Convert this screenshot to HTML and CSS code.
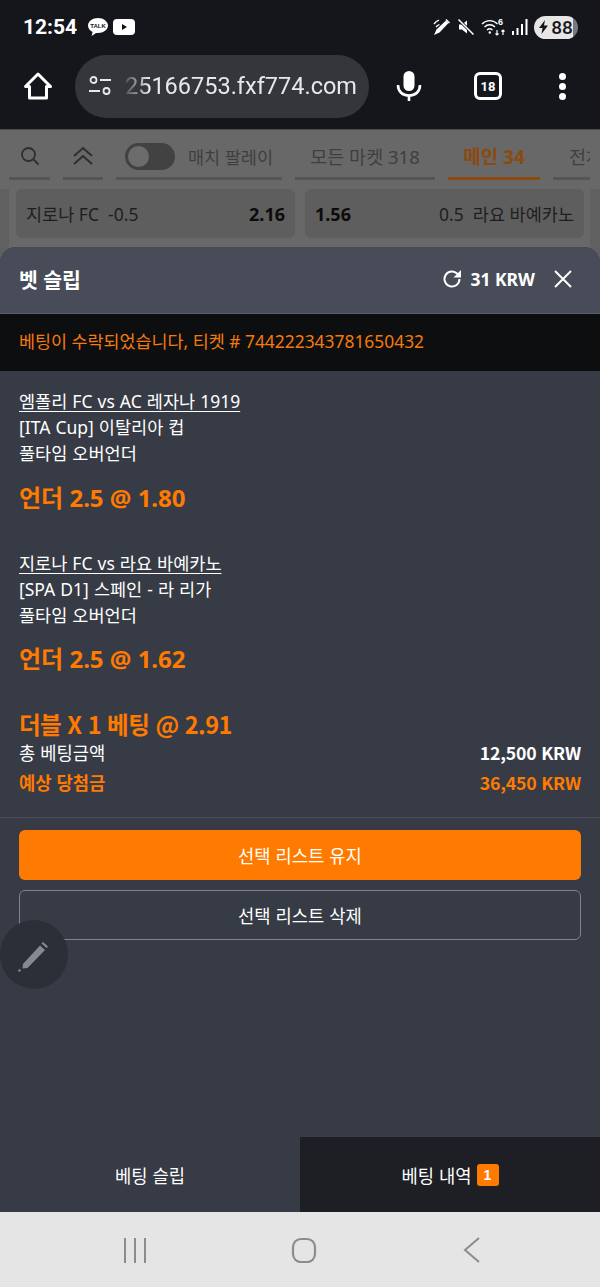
FILE: index.html
```html
<!DOCTYPE html>
<html lang="ko">
<head>
    <meta charset="UTF-8">
    <meta name="viewport" content="width=device-width, initial-scale=1.0">
    <title>벳 슬립</title>
    <link rel="stylesheet" href="styles.css">
</head>
<body>
<div class="phone">
    <div class="statusbar">
        <span class="clock">12:54</span>
        <svg class="st-talk" viewBox="0 0 22 20"><path d="M11 1C5.500 1 1 4.400 1 8.600c0 2.700 1.800 5 4.600 6.400l-1 4 4.500-3c.6.100 1.300.1 1.900.1 5.500 0 10-3.400 10-7.500S16.500 1 11 1z" fill="#fff"/><text x="11" y="11" class="st-talk-txt">TALK</text></svg>
        <svg class="st-yt" viewBox="0 0 22 16"><rect width="22" height="16" rx="4" fill="#fff"/><path d="M9 5l5 3-5 3z" fill="#111"/></svg>
        <span class="st-gap"></span>
        <svg class="st-icon" width="18" height="18" viewBox="0 0 18 18"><path d="M1 17l2.500-5.500L13 2.500l2.500 2.500L6.500 14.500z" fill="#fff"/><path d="M13.500 1l3.500 3.500-1 1L12.500 2z" fill="#fff"/><path d="M1 6c1.500-2 3-3.200 5-3.800M3 9c1-1.300 2-2 3.500-2.500" stroke="#fff" stroke-width="1.300" fill="none"/></svg>
        <svg class="st-icon" width="18" height="18" viewBox="0 0 18 18"><path d="M2 6.500h3L10 2.500v13l-5-4H2z" fill="#fff"/><path d="M1.500 1.500l15 15" stroke="#15161b" stroke-width="3"/><path d="M1.500 1.500l15 15" stroke="#fff" stroke-width="1.500"/></svg>
        <svg class="st-icon st-wifi" width="26" height="20" viewBox="0 0 26 20"><path d="M1 7c4.500-4.500 11-4.500 15.500 0M3.500 10c3-3 7.500-3 10.500 0M6 13c1.800-1.600 3.700-1.600 5.500 0" stroke="#fff" stroke-width="1.300" fill="none"/><circle cx="8.800" cy="15.500" r="1.200" fill="#fff"/><path d="M16 13v5M14.500 16.500l1.500 1.500 1.500-1.500M22 18v-5M20.500 14.500l1.500-1.500 1.500 1.500" stroke="#fff" stroke-width="1.200" fill="none"/><text x="17" y="8" class="st-six">6</text></svg>
        <svg class="st-icon" width="17" height="18" viewBox="0 0 17 18"><rect x="1" y="13" width="2" height="4" fill="#fff"/><rect x="5.500" y="10" width="2" height="7" fill="#fff"/><rect x="10" y="6" width="2" height="11" fill="#fff"/><rect x="14.500" y="1" width="2" height="16" fill="#fff"/></svg>
        <span class="battery"><svg width="9" height="14" viewBox="0 0 9 14"><path d="M6 0L0 8h3.500L2.500 14 9 5.500H5z" fill="#15161b"/></svg>88</span>
    </div>

    <div class="urlbar">
        <svg class="nav-home" width="30" height="30" viewBox="0 0 30 30"><path d="M15 3L2.500 15.500H6.500V27H23.500V15.500H27.500z" fill="none" stroke="#fff" stroke-width="3" stroke-linejoin="round"/></svg>
        <div class="omnibox">
            <svg width="24" height="20" viewBox="0 0 24 20"><circle cx="5.500" cy="4" r="3" fill="none" stroke="#e8e8ea" stroke-width="1.800"/><path d="M12 4h11M1 15h11" stroke="#e8e8ea" stroke-width="1.800"/><circle cx="18.500" cy="15" r="3" fill="none" stroke="#e8e8ea" stroke-width="1.800"/></svg>
            <span class="url">25166753.fxf774.com</span>
        </div>
        <svg class="nav-mic" width="26" height="32" viewBox="0 0 26 32"><rect x="7.500" y="1" width="11" height="20" rx="5.500" fill="#fff"/><path d="M2 15c0 6.500 4.500 10.500 11 10.500S24 21.500 24 15M13 25.500V31" fill="none" stroke="#fff" stroke-width="2.600"/></svg>
        <span class="tabs-count">18</span>
        <span class="kebab"><i></i><i></i><i></i></span>
    </div>

    <div class="page">
        <div class="market-tabs">
            <span class="mt mt-search"><svg width="20" height="20" viewBox="0 0 20 20"><circle cx="8.500" cy="8.500" r="6.500" fill="none" stroke="#2e2e2e" stroke-width="1.800"/><path d="M13.500 13.500L18.500 18.500" stroke="#2e2e2e" stroke-width="1.800"/></svg></span>
            <span class="mt mt-collapse"><svg width="20" height="20" viewBox="0 0 20 20"><path d="M1 10l9-8 9 8M1 18l9-8 9 8" fill="none" stroke="#2e2e2e" stroke-width="2"/></svg></span>
            <span class="mt mt-toggle"><span class="toggle"><i></i></span>매치 팔레이</span>
            <span class="mt mt-all">모든 마켓 318</span>
            <span class="mt mt-main">메인 34</span>
            <span class="mt mt-more">전체</span>
        </div>
        <div class="odds-wrap">
            <div class="odds-row">
                <div class="odd"><span>지로나 FC&nbsp; -0.5</span><b>2.16</b></div>
                <div class="odd"><b>1.56</b><span>0.5&nbsp; 라요 바예카노</span></div>
            </div>
        </div>
    </div>

    <div class="slip">
        <div class="slip-head">
            <span class="slip-title">벳 슬립</span>
            <svg class="refresh" width="20" height="20" viewBox="0 0 20 20"><path d="M17.500 10a7.500 7.500 0 1 1-2.200-5.300L17 6.500" fill="none" stroke="#fff" stroke-width="2"/><path d="M19 1V8.500H11.500z" fill="#fff"/></svg>
            <span class="balance">31 KRW</span>
            <svg class="close" width="20" height="20" viewBox="0 0 20 20"><path d="M2 2l16 16M18 2L2 18" stroke="#fff" stroke-width="2"/></svg>
        </div>
        <div class="notice">베팅이 수락되었습니다, 티켓 # 744222343781650432</div>

        <div class="bet">
            <a class="match">엠폴리 FC vs AC 레자나 1919</a>
            <p>[ITA Cup] 이탈리아 컵</p>
            <p>풀타임 오버언더</p>
            <div class="pick">언더 2.5 @ 1.80</div>
        </div>
        <div class="bet">
            <a class="match">지로나 FC vs 라요 바예카노</a>
            <p>[SPA D1] 스페인 - 라 리가</p>
            <p>풀타임 오버언더</p>
            <div class="pick">언더 2.5 @ 1.62</div>
        </div>

        <div class="summary">
            <div class="pick">더블 X 1 베팅 @ 2.91</div>
            <div class="sum-row"><span>총 베팅금액</span><b>12,500 KRW</b></div>
            <div class="sum-row sum-win"><span>예상 당첨금</span><b>36,450 KRW</b></div>
        </div>

        <div class="actions">
            <button class="btn btn-keep">선택 리스트 유지</button>
            <button class="btn btn-clear">선택 리스트 삭제</button>
        </div>

        <div class="slip-tabs">
            <span class="slip-tab">베팅 슬립</span>
            <span class="slip-tab slip-tab-on">베팅 내역 <em>1</em></span>
        </div>
    </div>

    <div class="fab"><svg width="36" height="36" viewBox="0 0 36 36"><path d="M7 27L24 8.500l5 4.500L11.500 31l-5 .5z" fill="#858994"/><path d="M25.500 6.500l1.500-1.500 5 4.500-1.500 1.500z" fill="#858994"/><circle cx="3.500" cy="33.500" r="1.300" fill="#858994"/></svg></div>

    <div class="softkeys">
        <svg width="26" height="26" viewBox="0 0 26 26"><path d="M3 1v25M13 1v25M23 1v25" stroke="#8c8c8c" stroke-width="2"/></svg>
        <svg width="26" height="26" viewBox="0 0 26 26"><rect x="2" y="2" width="22" height="23" rx="8" fill="none" stroke="#8c8c8c" stroke-width="2.200"/></svg>
        <svg width="26" height="26" viewBox="0 0 26 26"><path d="M20 1L6 13l14 12" fill="none" stroke="#8c8c8c" stroke-width="2"/></svg>
    </div>
</div>
</body>
</html>
```

FILE: styles.css
```css
* { box-sizing: border-box; }

html, body { margin: 0; padding: 0; }

body {
    width: 600px;
    height: 1287px;
    overflow: hidden;
    font-family: "Noto Sans", "Noto Sans CJK KR", sans-serif;
    color: #fff;
    background-color: #15161b;
}

.phone {
    position: relative;
    display: flex;
    flex-direction: column;
    width: 600px;
    height: 1287px;
}

/* status bar */
.statusbar {
    display: flex;
    align-items: center;
    height: 54px;
    padding: 0 22px 0 23px;
    background-color: #15161b;
}

.clock {
    font-family: Roboto, sans-serif;
    font-size: 21px;
    font-weight: 700;
    margin-right: 10px;
}

.st-talk { width: 22px; height: 20px; margin-right: 4px; }
.st-talk-txt { font-family: "Liberation Sans", sans-serif; font-size: 6px; font-weight: 700; text-anchor: middle; fill: #15161b; }
.st-yt { width: 22px; height: 16px; }
.st-gap { flex: 1; }
.st-icon { margin-right: 6px; }
.st-wifi { margin-right: 4px; }
.st-six { font-family: "Liberation Sans", sans-serif; font-size: 9px; font-weight: 700; fill: #fff; }

.battery {
    display: flex;
    align-items: center;
    justify-content: center;
    gap: 3px;
    width: 44px;
    height: 23px;
    border-radius: 12px;
    background: linear-gradient(to right, #e6e6e6 88%, #77787c 88%);
    color: #15161b;
    font-family: Roboto, sans-serif;
    font-size: 19px;
    font-weight: 500;
}

/* browser bar */
.urlbar {
    display: flex;
    align-items: center;
    height: 76px;
    padding: 0 0 11px 23px;
    background-color: #15161b;
    border-bottom: 1px solid #4a4b50;
}

.nav-home { flex: none; }

.omnibox {
    display: flex;
    align-items: center;
    gap: 13px;
    flex: none;
    width: 294px;
    height: 63px;
    margin-left: 22px;
    padding-left: 13px;
    border-radius: 32px;
    background-color: #35363b;
    overflow: hidden;
}

.url {
    font-family: Roboto, sans-serif;
    font-size: 23.500px;
    color: #e8e8ea;
    white-space: nowrap;
    -webkit-mask-image: linear-gradient(to right, rgba(0,0,0,.15) 0, #000 24px);
    mask-image: linear-gradient(to right, rgba(0,0,0,.15) 0, #000 24px);
}

.nav-mic { margin-left: 27px; flex: none; }

.tabs-count {
    display: flex;
    align-items: center;
    justify-content: center;
    flex: none;
    width: 28px;
    height: 28px;
    margin-left: 52px;
    border: 3px solid #fff;
    border-radius: 6px;
    font-family: Roboto, sans-serif;
    font-size: 13px;
    font-weight: 700;
}

.kebab {
    display: flex;
    flex-direction: column;
    flex: none;
    gap: 3px;
    margin-left: 57px;
}

.kebab i {
    width: 7px;
    height: 7px;
    border-radius: 50%;
    background-color: #fff;
}

/* dimmed page behind the slip */
.page {
    height: 169px;
    margin-bottom: -52px;
    background-color: #686868;
    color: #2a2a2a;
    font-size: 17.500px;
}

.market-tabs {
    display: flex;
    align-items: flex-start;
    gap: 13px;
    height: 59px;
    padding-left: 9px;
}

.mt {
    display: flex;
    align-items: center;
    justify-content: center;
    flex: none;
    height: 50px;
    padding-top: 5px;
    border-bottom: 3px solid #555;
    color: #3f3f3f;
    font-size: 18.500px;
}

.mt-search { width: 41px; }
.mt-collapse { width: 40px; }
.mt-toggle { justify-content: flex-start; width: 166px; padding-left: 9px; gap: 13px; font-size: 17.500px; }
.mt-all { width: 140px; }
.mt-main { width: 92px; border-bottom-color: #8a4a10; color: #8a4a10; font-weight: 700; font-size: 19px; }
.mt-more { justify-content: flex-start; width: 37px; padding-left: 16px; white-space: nowrap; overflow: hidden; }

.toggle {
    display: block;
    flex: none;
    width: 50px;
    height: 27px;
    padding: 3px;
    border-radius: 14px;
    background-color: #424242;
}

.toggle i {
    display: block;
    width: 21px;
    height: 21px;
    border-radius: 50%;
    background-color: #6c6c6c;
}

.odds-wrap {
    height: 110px;
    padding: 0 10px 0 9px;
    background-color: #606060;
}

.odds-row {
    display: flex;
    gap: 10px;
    height: 110px;
    padding: 0 6px 0 7px;
    background-color: #686868;
}

.odd {
    display: flex;
    align-items: center;
    justify-content: space-between;
    width: 279px;
    height: 49px;
    padding: 0 10px;
    border-radius: 6px;
    background-color: #5e5e5e;
    color: #1e1e1e;
}

.odd b { color: #0c0c0c; font-size: 18px; }

/* bet slip sheet */
.slip {
    position: relative;
    display: flex;
    flex-direction: column;
    flex: 1;
    border-radius: 16px 16px 0 0;
    background-color: #373b45;
    overflow: hidden;
}

.slip-head {
    display: flex;
    align-items: center;
    flex: none;
    height: 67px;
    padding: 0 27px 2px 19px;
    background-color: #474c58;
    border-bottom: 1px solid #5a5e69;
}

.slip-title { flex: 1; font-size: 20.500px; font-weight: 700; }
.refresh { margin-right: 8px; }
.balance { margin-right: 18px; font-size: 17.500px; font-weight: 700; }

.notice {
    flex: none;
    height: 57px;
    padding: 0 19px;
    line-height: 55px;
    background-color: #0d0e10;
    color: #f57a0c;
    font-size: 17.400px;
}

.bet {
    flex: none;
    height: 161.500px;
    padding: 17px 19px 0;
    font-size: 17.500px;
    line-height: 26px;
    word-spacing: 0.500px;
}

.bet p { margin: 0; }
.match { display: block; width: fit-content; text-decoration: underline; text-underline-offset: 3px; }

.pick {
    margin-top: 14.500px;
    color: #ff7a00;
    font-size: 24px;
    line-height: 34px;
    font-weight: 700;
    word-spacing: 0;
}

.summary {
    flex: none;
    padding: 0 19px 20px;
    border-bottom: 1px solid #4a4e5a;
    font-family: "Noto Sans CJK KR", sans-serif;
    font-size: 17.700px;
}

.summary .pick {
    margin-top: 17px;
    font-size: 23.500px;
    line-height: 26px;
    letter-spacing: -0.500px;
}

.sum-row {
    display: flex;
    justify-content: space-between;
    line-height: 30px;
}

.sum-row b { font-weight: 700; letter-spacing: -0.200px; }
.sum-win { color: #ff7a00; font-weight: 700; }

.actions {
    display: flex;
    flex-direction: column;
    gap: 10px;
    flex: none;
    padding: 12px 19px 0;
}

.btn {
    height: 50px;
    border-radius: 6px;
    color: #fff;
    font-family: "Noto Sans CJK KR", sans-serif;
    font-size: 17.700px;
}

.btn-keep { border: 0; background-color: #ff7a00; }
.btn-clear { border: 1px solid #80838c; background-color: transparent; }

.slip-tabs {
    display: flex;
    flex: none;
    height: 75px;
    margin-top: auto;
}

.slip-tab {
    display: flex;
    align-items: center;
    justify-content: center;
    gap: 5px;
    width: 300px;
    font-family: "Noto Sans CJK KR", sans-serif;
    font-size: 17.700px;
}

.slip-tab-on { background-color: #1d1f24; }

.slip-tab em {
    display: flex;
    align-items: center;
    justify-content: center;
    width: 22px;
    height: 22px;
    border-radius: 3px;
    background-color: #ff7a00;
    font-family: "Liberation Sans", sans-serif;
    font-size: 14px;
    font-style: normal;
    font-weight: 700;
}

/* floating edit button */
.fab {
    position: absolute;
    left: 0;
    top: 920px;
    display: flex;
    align-items: center;
    justify-content: center;
    width: 68px;
    height: 69px;
    border-radius: 50%;
    background-color: #2d2f38;
}

/* android nav */
.softkeys {
    display: flex;
    align-items: center;
    gap: 142.500px;
    flex: none;
    height: 75px;
    padding-left: 122px;
    background-color: #e5e5e5;
}
```
